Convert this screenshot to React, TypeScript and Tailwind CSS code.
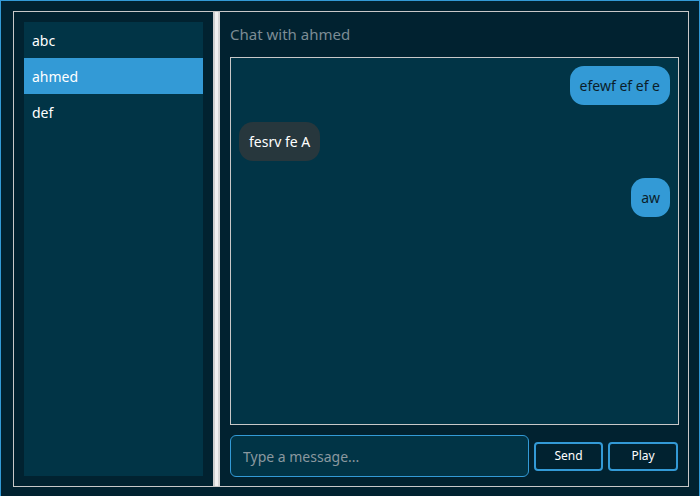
import React from 'react';

const contacts = ['abc', 'ahmed', 'def'];

const messages = [
  { text: 'efewf ef ef e', mine: true },
  { text: 'fesrv fe A', mine: false },
  { text: 'aw', mine: true },
];

export default function App() {
  const selected = 'ahmed';

  return (
    <div
      className="w-[700px] h-[496px] bg-[#012230] border-t border-l border-r border-[#339ad6] pt-[10px] pl-[12px] pr-[10px] pb-[9px] text-[14px]"
      style={{ fontFamily: '"Noto Sans", "Open Sans", sans-serif' }}
    >
      <div className="flex h-full border border-[#c8c8c8]">
        {/* Contacts */}
        <div className="w-[199px] p-[10px]">
          <div className="h-full bg-[#013446]">
            {contacts.map((c) => (
              <div
                key={c}
                className={`h-9 flex items-center px-2 text-white ${c === selected ? 'bg-[#339ad6]' : ''}`}
              >
                {c}
              </div>
            ))}
          </div>
        </div>

        {/* Splitter */}
        <div className="w-[7px] flex">
          <div className="w-[2px] bg-[#cfcfcf]" />
          <div className="w-[3px] bg-[#f0f0f0]" />
          <div className="w-[2px] bg-[#d6d6d6]" />
        </div>

        {/* Chat */}
        <div className="flex-1 flex flex-col pt-[10px] pl-[10px] pr-[9px] pb-[9px]">
          <div className="h-[25px] text-[15px] text-[#7c8c94] leading-[25px] mb-[10px]">Chat with ahmed</div>
          <div className="flex-1 bg-[#013446] border border-[#c8c8c8] p-2 flex flex-col gap-[17px]">
            {messages.map((m, i) => (
              <div key={i} className={`flex ${m.mine ? 'justify-end' : 'justify-start'}`}>
                <div
                  className={`h-[39px] px-[10px] rounded-[14px] flex items-center text-[14px] ${
                    m.mine ? 'bg-[#339ad6] text-[#0b1e2a]' : 'bg-[#27373d] text-white'
                  }`}
                >
                  {m.text}
                </div>
              </div>
            ))}
          </div>
          <div className="flex items-center gap-[5px] mt-[10px]">
            <input
              placeholder="Type a message..."
              className="w-[299px] h-[42px] rounded-[6px] border border-[#339ad6] bg-[#013446] px-3 text-[14px] text-white placeholder:text-[#8a989f] outline-none"
            />
            <button className="w-[69px] h-[29px] rounded-[4px] border-2 border-[#339ad6] bg-[#012230] text-white text-[12px]">
              Send
            </button>
            <button className="w-[70px] h-[29px] rounded-[4px] border-2 border-[#339ad6] bg-[#012230] text-white text-[12px]">
              Play
            </button>
          </div>
        </div>
      </div>
    </div>
  );
}
